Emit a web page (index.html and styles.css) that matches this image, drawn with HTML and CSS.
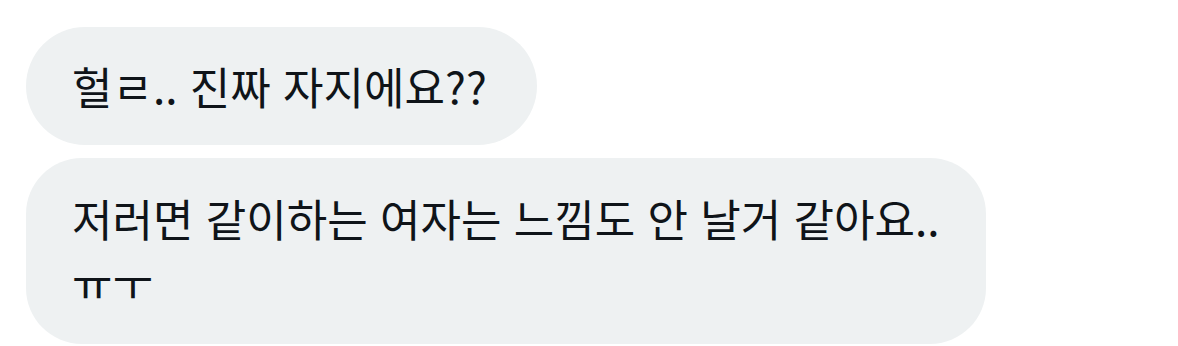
FILE: index.html
```html
<!DOCTYPE html>
<html lang="ko">
<head>
  <meta charset="UTF-8">
  <title>Messages</title>
  <link rel="stylesheet" href="styles.css">
</head>
<body>
  <!-- Received messages -->
  <div class="thread">
    <div class="bubble bubble--pill">헐ㄹ.. 진짜 자지에요??</div>
    <div class="bubble">저러면 같이하는 여자는 느낌도 안 날거 같아요..<br>ㅠㅜ</div>
  </div>
</body>
</html>
```

FILE: styles.css
```css
*, *:before,
*:after {
  box-sizing: border-box;
}

body {
  margin: 0;
  background: #ffffff;
  font-family: 'Noto Sans CJK KR', 'Noto Sans', sans-serif;
  color: #0f1419;
}

.thread {
  display: flex;
  flex-direction: column;
  align-items: flex-start;
  gap: 13px;
  padding: 27px 0 0 26px;
}

.bubble {
  background: #eef1f2;
  font-size: 44px;
  line-height: 64px;
  padding: 28px 46px 30px 46px;
  border-radius: 56px;
}

.bubble--pill {
  padding: 27px 50px 27px 46px;
  border-radius: 60px;
}
```
